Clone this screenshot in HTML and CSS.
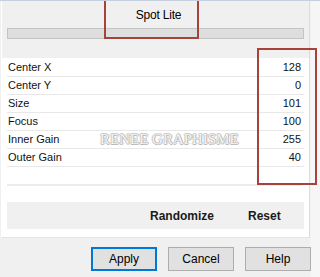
FILE: index.html
```html
<!DOCTYPE html>
<html lang="en">
<head>
  <meta charset="UTF-8" />
  <title>Spot Lite</title>
  <link rel="stylesheet" href="styles.css">
</head>
<body>

<div class="dialog">
  <div class="panel">
    <div class="head">
      <div class="title">Spot Lite</div>
      <div class="preview-bar"></div>
    </div>

    <div class="rows">
      <div class="row"><span>Center X</span><span>128</span></div>
      <div class="row"><span>Center Y</span><span>0</span></div>
      <div class="row"><span>Size</span><span>101</span></div>
      <div class="row"><span>Focus</span><span>100</span></div>
      <div class="row"><span>Inner Gain</span><span>255</span></div>
      <div class="row"><span>Outer Gain</span><span>40</span></div>
    </div>

    <div class="sep"></div>

    <div class="actions">
      <span class="action randomize">Randomize</span>
      <span class="action reset">Reset</span>
    </div>
  </div>

  <div class="buttons">
    <button class="btn default">Apply</button>
    <button class="btn">Cancel</button>
    <button class="btn">Help</button>
  </div>

  <!-- overlays -->
  <div class="watermark">RENEE GRAPHISME</div>
  <div class="mark mark-title"></div>
  <div class="mark mark-values"></div>
</div>

</body>
</html>
```

FILE: styles.css
```css
body {
  margin: 0;
  background-color: #f0f0f0;
  font-family: 'Liberation Sans', Arial, sans-serif;
  font-size: 11px;
  color: #000;
}

.dialog {
  position: relative;
  width: 320px;
  height: 277px;
  overflow: hidden;
  border-top: 1px solid #c5cfdd;
  box-sizing: border-box;
  background: linear-gradient(to right, #f0f0f0 310px, #f6f6f6 311px);
}

.panel {
  width: 307px;
  height: 236px;
  margin-left: 1px;
  border-left: 1px solid #fff;
  border-right: 1px solid #dcdcdc;
  border-bottom: 1px solid #e4e4e4;
  background-color: #fff;
}

.head {
  height: 57px;
  padding: 0 5px;
  background-color: #f0f0f0;
}

.title {
  height: 27px;
  line-height: 28px;
  text-align: center;
  font-size: 12px;
  letter-spacing: -0.2px;
  padding-left: 6px;
}

.preview-bar {
  height: 9px;
  border: 1px solid #c4c4c4;
  background-color: #dedede;
}

.rows {
  margin: 1px 5px 0;
}

.row {
  display: flex;
  justify-content: space-between;
  height: 17px;
  line-height: 17px;
  padding: 0 3px 0 1px;
  border-bottom: 1px solid #e8e8e8;
  color: #111;
}

.sep {
  height: 17px;
  margin: 0 7px 0 5px;
  border-bottom: 2px solid #ececec;
}

.actions {
  display: flex;
  height: 27px;
  margin: 16px 5px 0;
  background-color: #f0f0f0;
  font-size: 12px;
  font-weight: bold;
  line-height: 28px;
  color: #1a1a1a;
}

.randomize {
  margin-left: 143px;
}

.reset {
  margin-left: 34px;
}

.buttons {
  display: flex;
  justify-content: flex-end;
  gap: 11px;
  padding: 9px 9px 0 0;
}

.btn {
  width: 66px;
  height: 24px;
  padding: 0;
  border: 1px solid #adadad;
  background-color: #e1e1e1;
  font-family: 'Liberation Sans', Arial, sans-serif;
  font-size: 12px;
  color: #000;
}

.btn.default {
  border: 2px solid #0078d7;
}

.watermark {
  position: absolute;
  left: 100px;
  top: 130px;
  font-family: 'Liberation Serif', 'Times New Roman', serif;
  font-size: 15px;
  letter-spacing: 0;
  color: #f4f4f4;
  text-shadow: 1px 0 #b5b5b5, -1px 0 #c8c8c8, 0 1px #b5b5b5, 0 -1px #c8c8c8;
}

.mark {
  position: absolute;
  border: 2px solid #a5433a;
  box-sizing: border-box;
}

.mark-title {
  left: 104px;
  top: -4px;
  width: 95px;
  height: 42px;
}

.mark-values {
  left: 257px;
  top: 47px;
  width: 60px;
  height: 137px;
}
```
